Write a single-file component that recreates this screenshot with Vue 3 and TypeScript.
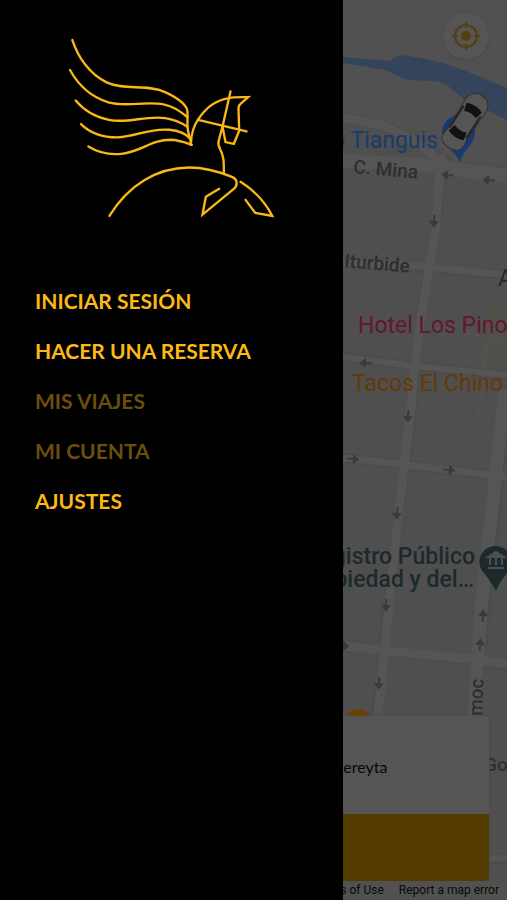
<script setup lang="ts">
interface MenuEntry {
  label: string
  disabled?: boolean
}

interface Arrow {
  x: number
  y: number
  angle: number
}

const entries: MenuEntry[] = [
  { label: 'INICIAR SESIÓN' },
  { label: 'HACER UNA RESERVA' },
  { label: 'MIS VIAJES', disabled: true },
  { label: 'MI CUENTA', disabled: true },
  { label: 'AJUSTES' },
]

// One-way street markers; angle 0 points right.
const arrows: Arrow[] = [
  { x: 448, y: 175, angle: 184 },
  { x: 489, y: 180, angle: 184 },
  { x: 434, y: 221, angle: 94 },
  { x: 366, y: 363, angle: 182 },
  { x: 408, y: 416, angle: 94 },
  { x: 353, y: 459, angle: 4 },
  { x: 449, y: 470, angle: 4 },
  { x: 397, y: 513, angle: 96 },
  { x: 386, y: 605, angle: 94 },
  { x: 343, y: 646, angle: 4 },
  { x: 483, y: 616, angle: -86 },
  { x: 480, y: 645, angle: -86 },
  { x: 379, y: 683, angle: 92 },
]
</script>

<template>
  <div class="screen">
    <aside class="drawer">
      <svg class="logo" viewBox="0 0 720 630" role="img" aria-label="Pegaso">
        <path d="M67 60C84 112 120 164 170 187C225 213 290 190 345 216C390 237 412 258 412 276V318C412 342 423 354 422 374" />
        <path d="M60 150C84 194 124 231 175 247C228 262 285 242 340 253C374 260 392 276 412 291" />
        <path d="M77 241C100 269 134 291 180 300C236 310 286 286 345 294C374 298 394 308 412 320" />
        <path d="M93 312C119 338 155 352 202 352C258 350 298 323 358 329C388 332 408 342 418 354" />
        <path d="M115 379C144 397 177 405 214 401C276 394 301 359 362 359C388 360 407 368 425 374" />
        <path d="M422 374C423 338 432 315 444 298C466 264 495 240 536 234C555 230 575 232 594 231L570 252Q564 257 565 270L567 332L551 371L526 366L517 319" />
        <path d="M541 214L517 319L506 360Q502 372 509 385C521 408 521 421 521 458" />
        <path d="M444 299L589 334" />
        <path d="M178 587C235 494 320 443 416 442C459 442 502 452 547 471C563 479 563 496 550 507L457 583L467 530L507 506" />
        <path d="M571 485C616 513 647 550 666 587L615 578L586 539" />
      </svg>
      <nav class="menu">
        <button v-for="entry in entries" :key="entry.label" type="button" class="entry" :disabled="entry.disabled">
          {{ entry.label }}
        </button>
      </nav>
    </aside>

    <main class="map">
      <svg class="tiles" viewBox="343 0 164 900" preserveAspectRatio="xMinYMin slice" aria-label="Mapa">
        <rect x="343" width="164" height="900" fill="#4f4f4f" />
        <path d="M343 0H507V165L450 160L420 130L343 112Z" fill="#515151" />
        <path d="M488 296H507V341H486ZM482 343H507V371H481Z" fill="#52504a" />
        <g class="edges">
          <path d="M343 118L382 125L420 143L450 163M442 161L436 230L420 320L410 430L390 580L376 716" />
          <path d="M343 263L507 275M343 357L507 376M343 458L507 477M343 645L507 665" />
          <path d="M507 385L495 520L478 690L470 810M489 859H507" />
        </g>
        <g class="roads">
          <path d="M343 118L382 125L420 143L444 165" stroke-width="9" />
          <path d="M343 161L420 165L507 176" stroke-width="14" />
          <path d="M441 155L435 235L419 330L409 425L395 545L378 716" stroke-width="9" />
          <path d="M343 263L420 266L507 275" stroke-width="7" />
          <path d="M343 357L415 366L507 375" stroke-width="6" />
          <path d="M343 458L400 464L507 477" stroke-width="7" />
          <path d="M343 646L470 659L507 664" stroke-width="9" />
          <path d="M505 390L493 500L481 610L474 720" stroke-width="13" />
          <path d="M420 325L507 341M487 343L477 430" stroke-width="1" />
          <path d="M489 858H507" stroke-width="6" />
        </g>
        <path d="M343 57L390 61Q397 53 409 56C451 62 474 75 507 88V120L478 106C461 101 454 88 443 83C430 79 416 82 405 79L385 70L343 63Z" fill="#33445b" />

        <g class="arrows">
          <path v-for="arrow in arrows" :key="`${arrow.x}-${arrow.y}`" :transform="`translate(${arrow.x} ${arrow.y}) rotate(${arrow.angle})`" d="M-6 0H5M1 -3L5 0L1 3Z" />
        </g>

        <path d="M460 162C455 151 443 145 442 133A18 18 0 0 1 459 115C469 116 476 123 475 133C474 145 463 150 460 162Z" fill="#173a70" />
        <g transform="translate(465 122) rotate(33)">
          <path d="M-8 -29Q0 -34 8 -29Q13 -24 12 -15L11 14Q14 24 9 28Q0 33 -9 28Q-14 24 -11 14L-12 -15Q-13 -24 -8 -29Z" fill="#555" stroke="#303030" stroke-width="1" />
          <path d="M-10 -13V13M10 -13V13" stroke="#242424" stroke-width="2" />
          <path d="M-9 -17Q0 -21 9 -17L7 -9Q0 -12 -7 -9ZM-7 8Q0 11 7 8L9 16Q0 20 -9 16Z" fill="#111" />
        </g>

        <g class="labels">
          <text x="438" y="148" font-size="23" fill="#173c6b" text-anchor="end">o Tianguis</text>
          <g class="street">
            <text transform="translate(353 173) rotate(5)" font-size="19">C. Mina</text>
            <text transform="translate(344 267) rotate(5)" font-size="19">Iturbide</text>
            <text transform="translate(482 716) rotate(-88)" font-size="19">moc</text>
            <text x="484" y="771" font-size="19">Go</text>
          </g>
          <text x="498" y="286" font-size="23">A</text>
          <text x="358" y="333" font-size="23" fill="#641631">Hotel Los Pinos</text>
          <text x="352" y="391" font-size="23" fill="#653905">Tacos El Chino</text>
          <g class="place">
            <text x="475" y="564" font-size="23" text-anchor="end">gistro Público</text>
            <text x="474" y="587" font-size="23" text-anchor="end">piedad y del…</text>
          </g>
        </g>

        <path d="M496 591Q492 583 484 573A16 16 0 1 1 507 573Q499 583 496 591Z" fill="#1d292c" />
        <path d="M488 557L496 552L504 557ZM488 568H504M490 558V565M496 558V565M502 558V565" fill="#4c5052" stroke="#4c5052" stroke-width="2" />
        <circle cx="358" cy="723" r="14" fill="#6b4200" />
      </svg>

      <div class="overlay">
        <button type="button" class="locate" aria-label="Mi ubicación">
          <svg viewBox="0 0 32 32">
            <circle cx="16" cy="16" r="11" />
            <path d="M16 2V8M16 24V30M2 16H8M24 16H30" />
            <circle class="dot" cx="16" cy="16" r="5" />
          </svg>
        </button>
        <section class="trip">
          <p class="place-name">ereyta</p>
          <div class="action"></div>
        </section>
        <footer class="legal">
          <a href="#terms">s of Use</a>
          <a href="#report">Report a map error</a>
        </footer>
      </div>
    </main>
  </div>
</template>

<style>
body {
  margin: 0;
  background: #000;
}
</style>

<style scoped>
.screen {
  display: flex;
  min-height: 100vh;
  overflow: hidden;
}

.drawer {
  box-sizing: border-box;
  flex: 0 0 auto;
  width: 67.7%;
  padding-top: 20px;
  background: #000;
}

.logo {
  display: block;
  width: 70%;
  margin-left: 50px;
  fill: none;
  stroke: #fab814;
  stroke-width: 7;
  stroke-linecap: round;
  stroke-linejoin: miter;
}

.menu {
  display: flex;
  flex-direction: column;
  align-items: flex-start;
  gap: 20px;
  padding: 56px 35px;
}

.entry {
  padding: 0;
  border: 0;
  background: none;
  color: #fdb913;
  font: 700 21px/30px Lato, sans-serif;
  text-align: left;
  cursor: pointer;
}

.entry:disabled {
  color: #6b4e0b;
  cursor: default;
}

.map {
  position: relative;
  flex: 1 1 0;
  min-width: 0;
  overflow: hidden;
  background: #4f4f4f;
}

.tiles {
  position: absolute;
  inset: 0;
  width: 100%;
  height: 100%;
}

.roads path,
.edges path {
  fill: none;
  stroke: #555;
}

.edges path {
  stroke: #4c4c4c;
  stroke-width: 10;
}

.arrows path {
  fill: #373b40;
  stroke: #373b40;
  stroke-width: 2;
}

.labels {
  fill: #292929;
  font-family: Roboto, sans-serif;
}

.street {
  fill: #2e2e2e;
  font-weight: 500;
}

.place {
  fill: #1d292c;
  font-weight: 500;
}

.overlay {
  position: relative;
  box-sizing: border-box;
  display: flex;
  flex-direction: column;
  height: 100%;
  padding-top: 13px;
}

.locate {
  display: grid;
  place-items: center;
  align-self: flex-end;
  width: 46px;
  height: 46px;
  margin-right: 18px;
  padding: 0;
  border: 0;
  border-radius: 50%;
  background: #555;
  box-shadow: 0 1px 3px #484848;
}

.locate svg {
  width: 32px;
  height: 32px;
  fill: none;
  stroke: #54400c;
  stroke-width: 2;
}

.locate .dot {
  fill: #54400c;
  stroke: none;
}

.trip {
  margin-top: auto;
  margin-right: 18px;
  border-radius: 0 4px 4px 0;
  overflow: hidden;
  background: #555;
  box-shadow: 0 0 3px #484848;
}

.place-name {
  margin: 0;
  padding: 39px 0 35px;
  color: #080808;
  font: 400 16px/24px Lato, sans-serif;
}

.action {
  height: 67px;
  background: #543c00;
}

.legal {
  display: flex;
  justify-content: flex-end;
  gap: 15px;
  padding-right: 8px;
  font: 400 12px/19px Roboto, sans-serif;
  white-space: nowrap;
  background: #515151;
}

.legal a {
  color: #080808;
  text-decoration: none;
}
</style>
